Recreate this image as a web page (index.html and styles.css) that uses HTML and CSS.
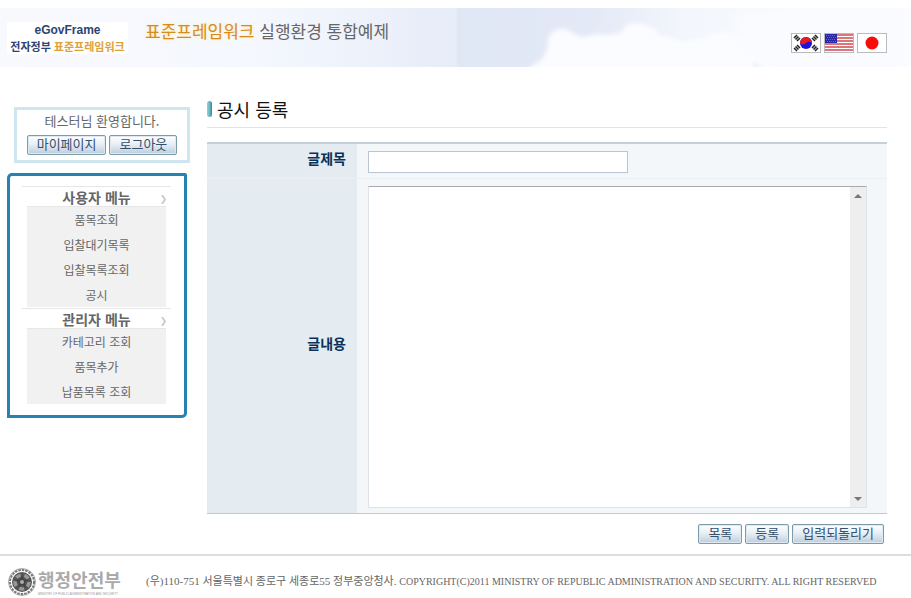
FILE: index.html
```html
<!DOCTYPE html>
<html lang="ko">
<head>
<meta charset="utf-8">
<title>공시 등록</title>
<link rel="stylesheet" href="styles.css">
</head>
<body>
<header class="header">
  <svg class="sky" viewBox="0 0 911 59" preserveAspectRatio="none" aria-hidden="true">
    <defs>
      <linearGradient id="skyLeft" x1="0" x2="1"><stop offset="0" stop-color="#f8f9fd"/><stop offset=".55" stop-color="#f5f8fe"/><stop offset="1" stop-color="#e6ecf8"/></linearGradient>
      <linearGradient id="skyRight" x1="0" x2="1"><stop offset="0" stop-color="#e0e7f5"/><stop offset=".3" stop-color="#e3e9f6"/><stop offset=".5" stop-color="#f3f6fc"/><stop offset="1" stop-color="#fdfdff"/></linearGradient>
      <filter id="soft" x="-5%" y="-20%" width="110%" height="140%"><feGaussianBlur stdDeviation="2"/></filter>
      <filter id="haze" x="-10%" y="-50%" width="120%" height="200%"><feGaussianBlur stdDeviation="7"/></filter>
    </defs>
    <rect width="458" height="59" fill="url(#skyLeft)"/>
    <rect x="457" width="454" height="59" fill="url(#skyRight)"/>
    <path d="M521 66Q532 58 541 52Q549 42 548 31Q552 19 565 21Q573 26 583 29Q595 25 606 27Q615 27 622 24Q625 14 637 15Q652 16 660 27Q675 31 683 34Q694 32 705 30Q720 20 738 28Q765 44 790 70Z" fill="#fbfcff" filter="url(#soft)"/>
    <path d="M730 10Q760-4 911-4V66H780Q740 40 730 10Z" fill="#fafbfe" filter="url(#haze)"/>
    <path d="M752 54Q757 54 762 62H754Z" fill="#eaf0fa" filter="url(#soft)"/>
  </svg>
  <a class="logo" href="#"><span class="logo-name">eGovFrame</span><span class="logo-sub"><b>전자정부</b> <b class="gold">표준프레임워크</b></span></a>
  <p class="site-title"><span class="orange">표준프레임워크</span> 실행환경 통합예제</p>
  <nav class="flags" aria-label="언어">
    <a href="#" aria-label="한국어"><svg viewBox="0 0 28 18"><rect width="28" height="18" fill="#fff"/><circle cx="14" cy="9" r="6" fill="#1a10e0"/><path d="M8 9A6 6 0 0 1 20 9Q17 6 14 9Q11 12 8 9Z" fill="#e51b20"/><g stroke="#222" stroke-width="1.6"><path d="M2 4l3-3M3.500 5.500l3-3M5 7l3-3M20 4l3 3M21.500 2.500l3 3M23 1l3 3M2 14l3 3M3.500 12.500l3 3M5 11l3 3M20 14l3-3M21.500 15.500l3-3M23 17l3-3"/></g></svg></a>
    <a href="#" aria-label="English"><svg viewBox="0 0 28 18"><rect width="28" height="18" fill="#fff"/><path d="M0 1h28M0 4h28M0 7h28M0 10h28M0 13h28M0 16h28" stroke="#d04a50" stroke-width="1.700"/><rect width="12" height="9" fill="#2929a5"/><path d="M1 1.500h10M2 3.500h9M1 5.500h10M2 7.500h9" stroke="#7474c8" stroke-width=".8" stroke-dasharray="1 1"/></svg></a>
    <a href="#" aria-label="日本語"><svg viewBox="0 0 28 18"><rect width="28" height="18" fill="#fff"/><circle cx="14" cy="9" r="6.500" fill="#fb0a0a"/></svg></a>
  </nav>
</header>

<div class="layout">
  <aside class="side">
    <section class="welcome">
      <p>테스터님 환영합니다.</p>
      <div class="welcome-buttons"><button class="btn" type="button">마이페이지</button><button class="btn" type="button">로그아웃</button></div>
    </section>
    <nav class="menu">
      <h2>사용자 메뉴<svg viewBox="0 0 5 9"><path d="M1 0l3 4.500L1 9" fill="none" stroke="#ccc" stroke-width="2"/></svg></h2>
      <ul>
        <li><a href="#">품목조회</a></li>
        <li><a href="#">입찰대기목록</a></li>
        <li><a href="#">입찰목록조회</a></li>
        <li><a href="#">공시</a></li>
      </ul>
      <h2>관리자 메뉴<svg viewBox="0 0 5 9"><path d="M1 0l3 4.500L1 9" fill="none" stroke="#ccc" stroke-width="2"/></svg></h2>
      <ul>
        <li><a href="#">카테고리 조회</a></li>
        <li><a href="#">품목추가</a></li>
        <li><a href="#">납품목록 조회</a></li>
      </ul>
    </nav>
  </aside>

  <main class="main">
    <h1>공시 등록</h1>
    <form>
      <table class="form-table">
        <tr><th scope="row"><label for="title">글제목</label></th><td><input id="title" type="text"></td></tr>
        <tr><th scope="row"><label for="content">글내용</label></th><td>
          <div class="editor">
            <textarea id="content"></textarea>
            <span class="track" aria-hidden="true">
              <svg viewBox="0 0 8 4"><path d="M4 0L8 4H0Z" fill="#777"/></svg>
              <svg viewBox="0 0 8 4"><path d="M0 0H8L4 4Z" fill="#777"/></svg>
            </span>
          </div>
        </td></tr>
      </table>
      <div class="actions"><button class="btn" type="button">목록</button><button class="btn" type="submit">등록</button><button class="btn" type="reset">입력되돌리기</button></div>
    </form>
  </main>
</div>

<footer class="footer">
  <div class="ministry">
    <svg viewBox="0 0 30 30" aria-hidden="true"><circle cx="15" cy="15" r="13.500" fill="none" stroke="#aaa" stroke-width="1"/><circle cx="15" cy="15" r="12" fill="none" stroke="#777" stroke-width="2" stroke-dasharray="2.500 1"/><circle cx="15" cy="15" r="10" fill="#555"/><circle cx="15" cy="15" r="7" fill="none" stroke="#999" stroke-width="3.500" stroke-dasharray="5 3.800"/><path d="M15 8l1.800 4.600 4.900.2-3.800 3.100 1.300 4.800-4.200-2.700-4.200 2.700 1.300-4.800-3.800-3.100 4.900-.2z" fill="#444"/><circle cx="15" cy="15" r="2" fill="#aaa"/></svg>
    <div><strong>행정안전부</strong><small>MINISTRY OF PUBLIC ADMINISTRATION AND SECURITY</small></div>
  </div>
  <p>(우)110-751 서울특별시 종로구 세종로55 정부중앙청사. <span>COPYRIGHT(C)2011 MINISTRY OF REPUBLIC ADMINISTRATION AND SECURITY. ALL RIGHT RESERVED</span></p>
</footer>
</body>
</html>
```

FILE: styles.css
```css
* { box-sizing: border-box; }
body {
  margin: 8px 0 0;
  font: 12px/25px "Noto Sans CJK KR", sans-serif;
  color: #666;
  background: #fff;
}
p, h1, h2, ul { margin: 0; padding: 0; }
ul { list-style: none; }
a { color: inherit; text-decoration: none; }
svg { display: block; }

.header {
  position: relative;
  display: flex;
  align-items: flex-start;
  height: 59px;
  padding: 14px 24px 0 7px;
}
.sky { position: absolute; inset: 0; width: 100%; height: 100%; z-index: -1; }
.logo {
  width: 121px;
  height: 32px;
  background: #fff;
  text-align: center;
  color: #2c4375;
}
.logo span { display: block; line-height: 16px; }
.logo-name { font-family: "Liberation Sans Narrow", "Liberation Sans", sans-serif; font-size: 12px; font-weight: bold; }
.logo-sub { font-size: 11px; white-space: nowrap; }
.logo .gold { color: #dda23a; }
.site-title { margin-left: 17px; font-size: 17px; line-height: 18px; color: #666; }
.orange { color: #d68b20; text-shadow: 0 0 3px #ffe9a0; }
.flags { display: flex; gap: 3px; margin: 11px 0 0 auto; }
.flags a { width: 30px; height: 20px; border: 1px solid #bbb; }

.layout { display: flex; gap: 17px; padding: 40px 24px 0 7px; }
.side { flex: 0 0 183px; }
.welcome {
  margin-left: 7px;
  height: 56px;
  border: 3px solid #cde6f0;
  text-align: center;
  font-size: 13px;
}
.welcome p { line-height: 22px; }
.welcome-buttons { display: flex; justify-content: center; gap: 3px; margin-top: 3px; }
.btn {
  height: 20px;
  padding: 0 9px 3px;
  border: 1px solid #7b9ca8;
  border-radius: 2px;
  box-shadow: inset 0 0 0 1px #dfe9f1;
  background: linear-gradient(#fff, #e8eff6 45%, #bccddd);
  color: #34506b;
  font: 13px/14px "Noto Sans CJK KR", sans-serif;
  white-space: nowrap;
}
.menu {
  width: 180px;
  margin-top: 10px;
  padding: 10px 13px 10px 12px;
  border: 3px solid #2682b0;
  border-radius: 5px 2px 5px 0;
  line-height: 25px;
}
.menu h2 {
  position: relative;
  height: 20px;
  border-top: 1px solid #e6e6e6;
  font-size: 14px;
  line-height: 20px;
  text-align: center;
}
.menu h2 svg { position: absolute; right: 5px; top: 8px; width: 5px; height: 9px; }
.menu ul {
  margin: 0 5px 1px;
  border-top: 1px solid #e6e6e6;
  background: #f1f1f1;
  text-align: center;
}

.main { flex: 1; min-width: 0; }
.main h1 {
  display: flex;
  align-items: center;
  gap: 5px;
  height: 21px;
  margin-bottom: 14px;
  padding-bottom: 16px;
  border-bottom: 1px solid #e3e3e3;
  font-size: 18px;
  line-height: 20px;
  font-weight: normal;
  color: #111;
}
h1::before {
  content: "";
  width: 5px;
  height: 16px;
  border-radius: 3px;
  background: linear-gradient(90deg, #91d4da, #5fb2bd 60%, #3f858e);
}
.form-table {
  width: 100%;
  border-collapse: collapse;
  border-top: 2px solid #c3cfd9;
  border-bottom: 1px solid #bccbd8;
}
.form-table th {
  width: 150px;
  padding: 0 11px 5px 0;
  background: #e4ecf2;
  color: #0a3158;
  font-size: 14px;
  text-align: right;
}
.form-table td { padding: 7px 20px 5px 11px; background: #f3f7fa; }
.form-table tr + tr { border-top: 1px solid #edf0f2; }
input, textarea { display: block; font: 12px/18px "Noto Sans CJK KR", sans-serif; }
input { width: 260px; height: 22px; border: 1px solid #b9c5d3; background: #fff; }
.editor {
  display: flex;
  height: 322px;
  border: 1px solid #dde3e8;
  border-top-color: #a8abae;
  background: #fff;
}
textarea { flex: 1; min-width: 0; border: 0; resize: none; background: transparent; }
.track {
  display: flex;
  flex-direction: column;
  justify-content: space-between;
  align-items: center;
  width: 16px;
  padding: 7px 0 6px;
  background: #eee;
}
.track svg { width: 8px; height: 4px; }
.actions { display: flex; justify-content: flex-end; gap: 3px; padding: 10px 3px 0 0; }

.footer {
  display: flex;
  align-items: flex-start;
  margin-top: 10px;
  padding: 11px 0 0 7px;
  border-top: 2px solid #ddd;
  white-space: nowrap;
}
.ministry { display: flex; align-items: flex-start; gap: 1px; width: 139px; }
.ministry svg { width: 30px; height: 30px; }
.ministry strong { display: block; font-size: 18px; line-height: 24px; color: #aaa; }
.ministry small { display: block; padding-top: 1px; font: 3px/4px "Liberation Sans", sans-serif; color: #999; }
.footer p { padding-top: 2px; font-family: "Liberation Serif", "Noto Sans CJK KR", serif; font-size: 11px; }
.footer p span { font-size: 10px; }
```
